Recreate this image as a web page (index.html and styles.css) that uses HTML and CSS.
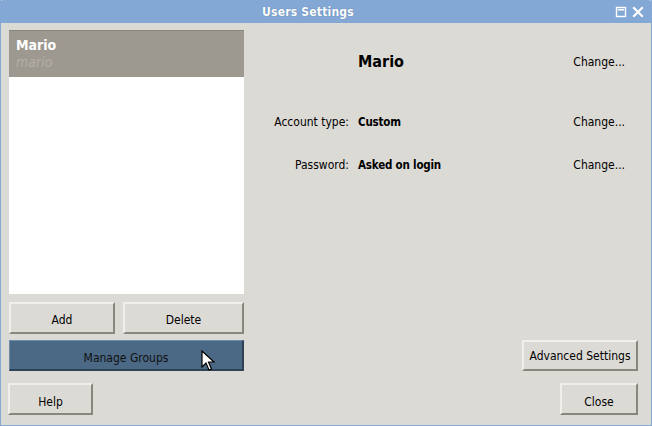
FILE: index.html
```html
<!DOCTYPE html>
<html>
<head>
<meta charset="utf-8">
<link rel="stylesheet" href="styles.css">
</head>
<body>
<div class="window">
  <div class="titlebar">
    <span class="title">Users Settings</span>
    <div class="wm">
      <svg width="12" height="12" viewBox="0 0 12 12"><rect x="1.5" y="1.5" width="9" height="9" fill="none" stroke="#fff" stroke-width="1.4"/><rect x="3" y="3" width="6" height="1.5" fill="#fff"/></svg>
      <svg width="12" height="12" viewBox="0 0 12 12"><path d="M2 2 L10 10 M10 2 L2 10" stroke="#fff" stroke-width="2.2" stroke-linecap="square"/></svg>
    </div>
  </div>
  <div class="content">
    <div class="top">
      <div class="left">
        <div class="list">
          <div class="row selected">
            <div class="name">Mario</div>
            <div class="login">mario</div>
          </div>
        </div>
        <div class="btnrow">
          <button class="btn add">Add</button>
          <button class="btn del">Delete</button>
        </div>
        <button class="btn manage">Manage Groups</button>
      </div>
      <div class="right">
        <div class="details">
          <div class="label"></div>
          <div class="value big">Mario</div>
          <div class="change">Change...</div>
          <div class="label">Account type:</div>
          <div class="value">Custom</div>
          <div class="change">Change...</div>
          <div class="label">Password:</div>
          <div class="value">Asked on login</div>
          <div class="change">Change...</div>
        </div>
        <div class="adv">
          <button class="btn advbtn">Advanced Settings</button>
        </div>
      </div>
    </div>
    <div class="bottom">
      <button class="btn help">Help</button>
      <button class="btn close">Close</button>
    </div>
  </div>
  <svg class="cursor" width="14" height="22" viewBox="0 0 14 22"><path d="M1 1 L1 17 L5 13 L8 20 L10.5 19 L7.5 12 L13 12 Z" fill="#fff" stroke="#000" stroke-width="1.2" stroke-linejoin="miter"/></svg>
</div>
</body>
</html>
```
FILE: styles.css
```css
html, body {
  margin: 0;
  padding: 0;
  background: #dcdad5;
}
body {
  font-family: "DejaVu Sans Condensed", "DejaVu Sans", sans-serif;
  font-size: 12px;
  color: #000;
}
.window {
  position: relative;
  width: 652px;
  height: 426px;
  box-sizing: border-box;
  border: 1px solid #85a9d6;
  border-top: none;
  background: #dcdad5;
  display: flex;
  flex-direction: column;
}
.titlebar {
  height: 23px;
  margin: 0 -1px;
  padding-right: 36px;
  background: #84a8d6;
  border-radius: 4px 4px 0 0;
  position: relative;
  display: flex;
  align-items: center;
  justify-content: center;
}
.title {
  color: #fff;
  font-weight: bold;
  font-size: 12px;
  text-shadow: 0 0 1px #4d6f99;
  letter-spacing: 0.2px;
}
.wm {
  position: absolute;
  right: 8px;
  top: 6px;
  display: flex;
  gap: 5px;
}
.content {
  flex: 1;
  display: flex;
  flex-direction: column;
  padding: 7px 13px 10px 7px;
}
.top {
  display: flex;
  flex: 1;
}
.left {
  width: 236px;
  display: flex;
  flex-direction: column;
  padding-left: 1px;
  box-sizing: border-box;
}
.list {
  height: 264px;
  background: #fff;
  box-sizing: border-box;
}
.row.selected {
  background: #9e9990;
  border-top: 1px solid #8a857c;
  height: 47px;
  box-sizing: border-box;
  padding: 6px 7px;
}
.name {
  color: #fff;
  font-weight: bold;
  font-size: 14px;
  line-height: 17px;
}
.login {
  color: #b3aea6;
  font-style: italic;
  font-size: 14px;
  line-height: 16px;
}
.btn {
  font-family: inherit;
  font-size: 12px;
  color: #000;
  background: #dcdad5;
  box-sizing: border-box;
  border: 2px solid;
  border-color: #f0efec #8a867e #8a867e #f0efec;
  padding: 4px 0 0 0;
  margin: 0;
}
.btnrow {
  display: flex;
  gap: 8px;
  margin-top: 8px;
}
.add { width: 106px; height: 32px; }
.del { flex: 1; height: 32px; }
.manage {
  margin-top: 6px;
  height: 31px;
  background: #4b6885;
  border-color: #6d8bab #2d4157 #2d4157 #6d8bab;
  border-width: 1px 2px 2px 1px;
  color: #111;
  padding-top: 5px;
}
.right {
  flex: 1;
  display: flex;
  flex-direction: column;
}
.details {
  display: grid;
  grid-template-columns: 105px auto 1fr auto;
  grid-template-rows: 17px 43px 17px 26px 17px;
  column-gap: 9px;
  align-items: center;
  padding: 23px 13px 0 0;
}
.details .change { grid-column: 4; }
.details .value { grid-column: 2; font-weight: bold; white-space: nowrap; font-size: 11.5px; letter-spacing: -0.2px; }
.details .label { grid-column: 1; text-align: right; }
.details > :nth-child(4) { grid-row: 3; }
.details > :nth-child(5) { grid-row: 3; }
.details > :nth-child(6) { grid-row: 3; }
.details > :nth-child(7) { grid-row: 5; }
.details > :nth-child(8) { grid-row: 5; }
.details > :nth-child(9) { grid-row: 5; }
.details .big { font-size: 16px; letter-spacing: 0; }
.adv {
  margin-top: auto;
  display: flex;
  justify-content: flex-end;
}
.advbtn { width: 116px; height: 31px; padding-top: 1px; }
.bottom {
  display: flex;
  justify-content: space-between;
  margin-top: 12px;
}
.help { width: 85px; height: 32px; padding-top: 5px; }
.close { width: 78px; height: 32px; padding-top: 5px; }
.cursor {
  position: absolute;
  left: 200px;
  top: 350px;
}
```
